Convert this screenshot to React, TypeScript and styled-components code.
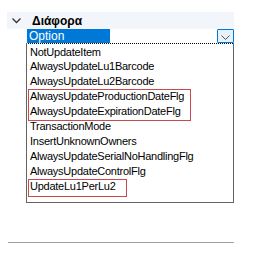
import styled, { createGlobalStyle } from "styled-components";

const Global = createGlobalStyle`
  html, body { margin: 0; padding: 0; background: #fff; }
  body { font-family: "Liberation Sans", Arial, sans-serif; }
`;

const items = [
  "NotUpdateItem",
  "AlwaysUpdateLu1Barcode",
  "AlwaysUpdateLu2Barcode",
  "AlwaysUpdateProductionDateFlg",
  "AlwaysUpdateExpirationDateFlg",
  "TransactionMode",
  "InsertUnknownOwners",
  "AlwaysUpdateSerialNoHandlingFlg",
  "AlwaysUpdateControlFlg",
  "UpdateLu1PerLu2",
];

export default function App() {
  return (
    <Page>
      <Global />
      <Category>
        <Chevron viewBox="0 0 9 6" width="9" height="6">
          <path d="M0.5 0.5 L4.5 4.5 L8.5 0.5" fill="none" stroke="#333" strokeWidth="1.3" />
        </Chevron>
        <span className="cat__title">Διάφορα</span>
      </Category>
      <EditRow>
        <Selected>Option</Selected>
        <DropButton>
          <svg viewBox="0 0 9 5" width="9" height="5">
            <path d="M0.5 0.5 L4.5 4.5 L8.5 0.5" fill="none" stroke="#555" strokeWidth="1" />
          </svg>
        </DropButton>
      </EditRow>
      <List>
        {items.map((it, i) => (
          <Item key={it} $focus={i === 0}>{it}</Item>
        ))}
        <Mark $top={46} $height={30} $width={161} />
        <Mark $top={136} $height={16} $width={97} />
      </List>
      <Separator />
    </Page>
  );
}

const Page = styled.div`
  width: 255px;
  height: 253px;
  padding-top: 12px;
  box-sizing: border-box;
`;

const Category = styled.div`
  display: flex;
  align-items: center;
  margin-left: 7px;
  width: 227px;
  height: 17px;
  background: #f2f6fb;

  .cat__title {
    margin-left: 11px;
    font-family: "Liberation Sans", Arial, sans-serif;
    font-weight: 700;
    font-size: 12px;
    color: #000;
    padding-top: 1px;
  }
`;

const Chevron = styled.svg`
  margin-left: 5px;
`;

const EditRow = styled.div`
  display: flex;
  align-items: stretch;
  height: 14px;
  margin-left: 27px;
  width: 207px;
`;

const Selected = styled.div`
  width: 83px;
  background: #0078d7;
  color: #fff;
  font-size: 12px;
  line-height: 14px;
  padding-left: 2px;
  box-sizing: border-box;
`;

const DropButton = styled.div`
  margin-left: auto;
  width: 17px;
  box-sizing: border-box;
  border: 1px solid #0078d7;
  border-radius: 1px;
  background: #e5f1fb;
  display: flex;
  align-items: center;
  justify-content: center;
  padding-top: 2px;
`;

const List = styled.div`
  position: relative;
  margin-left: 26px;
  width: 208px;
  height: 160px;
  box-sizing: border-box;
  border: 1px solid #646464;
  border-top: none;
  padding: 2px 0 0 1px;
`;

const Item = styled.div<{ $focus?: boolean }>`
  height: 15px;
  line-height: 15px;
  font-size: 11px;
  letter-spacing: -0.25px;
  color: #000;
  padding-left: 2px;
  box-sizing: border-box;
  border-top: ${(p) => (p.$focus ? "1px dotted #000" : "none")};
  margin-top: ${(p) => (p.$focus ? "-2px" : "0")};
  padding-top: ${(p) => (p.$focus ? "1px" : "0")};
  height: ${(p) => (p.$focus ? "16px" : "15px")};
`;

const Mark = styled.div<{ $top: number; $height: number; $width: number }>`
  position: absolute;
  left: 1px;
  top: ${(p) => p.$top}px;
  width: ${(p) => p.$width}px;
  height: ${(p) => p.$height}px;
  border: 1px solid #c94a4a;
  pointer-events: none;
`;

const Separator = styled.div`
  margin: 39px 0 0 8px;
  width: 226px;
  height: 1px;
  background: #a0a0a0;
`;
